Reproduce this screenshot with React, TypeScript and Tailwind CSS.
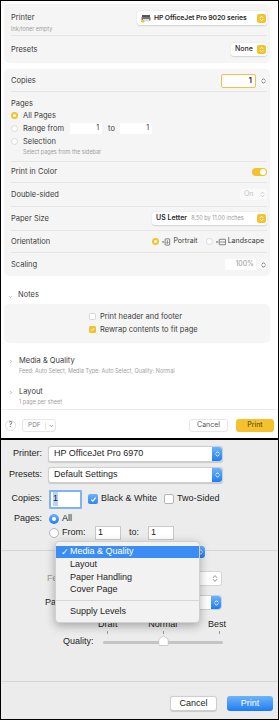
import React from "react"

// tiny up/down chevrons used in steppers
function Chevs({ color = "white", w = 5, h = 7 }: { color?: string; w?: number; h?: number }) {
  return (
    <svg width={w} height={h} viewBox="0 0 5 7">
      <path d="M1 2.7L2.5 1.2L4 2.7M1 4.3L2.5 5.8L4 4.3" stroke={color} strokeWidth="0.9" fill="none" strokeLinecap="round" strokeLinejoin="round" />
    </svg>
  )
}

function YStep() {
  return (
    <span className="flex h-[9px] w-[9px] shrink-0 items-center justify-center rounded-[2px] bg-[#f4c22c]">
      <Chevs />
    </span>
  )
}

function GrayStep() {
  return (
    <span className="flex h-[11px] w-[8px] shrink-0 items-center justify-center rounded-full bg-[#fafafa]">
      <Chevs color="#666" w={5} h={8} />
    </span>
  )
}

function YRadio() {
  return (
    <span className="flex h-[7px] w-[7px] shrink-0 items-center justify-center rounded-full bg-[#f4c22c]">
      <span className="h-[3px] w-[3px] rounded-full bg-white" />
    </span>
  )
}

function ERadio({ className = "" }: { className?: string }) {
  return <span className={`block h-[7px] w-[7px] shrink-0 rounded-full border border-[#d9d9d9] bg-white ${className}`} />
}

function Row({ h, label, children, last }: { h: string; label: string; children?: React.ReactNode; last?: boolean }) {
  return (
    <div className={`flex ${h} items-center justify-between ${last ? "" : "border-b border-[#e6e6e6]"}`}>
      <span className="whitespace-nowrap text-[7.5px] text-[#3c3c3c]">{label}</span>
      {children}
    </div>
  )
}

function TopDialog() {
  return (
    <div className="flex h-[437px] flex-col bg-white font-['Inter',sans-serif] whitespace-nowrap">
      <div className="pl-[3px] pt-[3px]">
        {/* printer / presets card */}
        <div className="w-[266px] rounded-[5px] bg-[#f5f5f5] pl-[7px] pr-[3px]">
          <div className="h-[32px] border-b border-[#e6e6e6] pt-[7px]">
            <div className="flex h-[14px] items-center justify-between">
              <span className="text-[7.5px] text-[#3c3c3c]">Printer</span>
              <div className="flex h-[14px] w-[130px] items-center rounded-[3px] bg-white pl-[4px] pr-[1px] shadow-[0_0.5px_1.5px_rgba(0,0,0,0.15)]">
                <svg width="10" height="9" viewBox="0 0 10 9" className="shrink-0">
                  <rect x="1" y="1" width="8" height="2" fill="#555" />
                  <rect x="0.5" y="3" width="9" height="3.5" rx="0.5" fill="#777" />
                  <rect x="2" y="5" width="6" height="2.5" fill="#ddd" />
                  <circle cx="1.8" cy="7.3" r="1.5" fill="#f4c22c" />
                </svg>
                <span className="ml-[3px] flex-1 text-[6.8px] font-semibold tracking-[-0.1px] text-[#2a2a2a]">HP OfficeJet Pro 9020 series</span>
                <YStep />
              </div>
            </div>
            <div className="text-[5.5px] leading-[8px] text-[#a0a0a0]">Ink/toner empty</div>
          </div>
          <Row h="h-[27px]" label="Presets" last>
            <div className="flex h-[13px] w-[36px] items-center justify-between rounded-[3px] bg-white pl-[4px] pr-[1px] shadow-[0_0.5px_1.5px_rgba(0,0,0,0.15)]">
              <span className="text-[7px] font-medium text-[#2a2a2a]">None</span>
              <YStep />
            </div>
          </Row>
        </div>

        {/* main options card */}
        <div className="mt-[6px] w-[266px] rounded-[5px] bg-[#f5f5f5] pl-[7px] pr-[3px]">
          <div className="flex h-[23px] items-center justify-between border-b border-[#e6e6e6] pt-[2px]">
            <span className="text-[7.5px] text-[#3c3c3c]">Copies</span>
            <div className="flex items-center gap-[3px]">
              <div className="flex h-[14px] w-[35px] items-center justify-end rounded-[2px] border-[1.5px] border-[#f1c24a] bg-white pr-[3px] text-[7.5px] font-semibold text-[#222]">
                1
              </div>
              <GrayStep />
            </div>
          </div>

          <div className="h-[70px] border-b border-[#e6e6e6] pt-[7px]">
            <div className="flex h-[10px] items-center text-[7.5px] text-[#3c3c3c]">Pages</div>
            <div className="flex h-[13px] items-center gap-[5px]">
              <YRadio />
              <span className="text-[7.5px] text-[#3c3c3c]">All Pages</span>
            </div>
            <div className="flex h-[13px] items-center">
              <ERadio />
              <span className="ml-[5px] w-[47px] text-[7.5px] text-[#3c3c3c]">Range from</span>
              <span className="flex h-[11px] w-[32px] items-center justify-end bg-white pr-[3px] text-[7px] text-[#333]">1</span>
              <span className="ml-[6px] w-[12px] text-[7.5px] text-[#3c3c3c]">to</span>
              <span className="flex h-[11px] w-[32px] items-center justify-end bg-white pr-[3px] text-[7px] text-[#333]">1</span>
            </div>
            <div className="flex h-[13px] items-center gap-[5px]">
              <ERadio />
              <span className="text-[7.5px] text-[#3c3c3c]">Selection</span>
            </div>
            <div className="flex h-[8px] items-center pl-[12px] text-[5.5px] text-[#a0a0a0]">Select pages from the sidebar</div>
          </div>

          <Row h="h-[21px]" label="Print in Color">
            <span className="flex h-[8px] w-[15px] items-center justify-end rounded-full bg-[#f4c22c] pr-[1px]">
              <span className="h-[6px] w-[6px] rounded-full bg-white" />
            </span>
          </Row>

          <Row h="h-[24px]" label="Double-sided">
            <span className="flex h-[11px] w-[27px] items-center justify-between rounded-[3px] bg-[#fafafa] pl-[4px] pr-[2px] text-[7px] text-[#c4c4c4]">
              On
              <Chevs color="#c4c4c4" w={5} h={7} />
            </span>
          </Row>

          <Row h="h-[24px]" label="Paper Size">
            <div className="flex h-[13px] w-[115px] items-center rounded-[3px] bg-white pl-[4px] pr-[1px] shadow-[0_0.5px_1.5px_rgba(0,0,0,0.15)]">
              <span className="text-[7px] font-semibold text-[#2a2a2a]">US Letter</span>
              <span className="ml-[4px] flex-1 text-[5.5px] text-[#9a9a9a]">8.50 by 11.00 inches</span>
              <YStep />
            </div>
          </Row>

          <Row h="h-[22px]" label="Orientation">
            <div className="flex items-center pr-[3px]">
              <YRadio />
              <svg width="9" height="8" viewBox="0 0 10 8" className="ml-[3px]">
                <path d="M0.5 4H2.5M1.5 3L0.5 4L1.5 5" stroke="#555" strokeWidth="0.7" fill="none" />
                <rect x="3.5" y="0.5" width="5" height="7" rx="0.6" stroke="#555" strokeWidth="0.8" fill="none" />
                <path d="M6 2V5.5M4.8 4.4L6 5.6L7.2 4.4" stroke="#555" strokeWidth="0.7" fill="none" />
              </svg>
              <span className="ml-[2px] text-[7px] text-[#3c3c3c]">Portrait</span>
              <ERadio className="ml-[8px]" />
              <svg width="10" height="8" viewBox="0 0 11 8" className="ml-[3px]">
                <path d="M0.5 4H2.5M1.5 3L0.5 4L1.5 5" stroke="#555" strokeWidth="0.7" fill="none" />
                <rect x="3.5" y="1" width="7" height="6" rx="0.6" stroke="#555" strokeWidth="0.8" fill="none" />
                <path d="M4 4H10" stroke="#555" strokeWidth="0.7" />
              </svg>
              <span className="ml-[2px] text-[7px] text-[#3c3c3c]">Landscape</span>
            </div>
          </Row>

          <Row h="h-[23px]" label="Scaling" last>
            <div className="flex items-center gap-[3px]">
              <span className="flex h-[11px] w-[31px] items-center justify-end bg-white pr-[2px] text-[7px] text-[#9a9a9a]">100%</span>
              <GrayStep />
            </div>
          </Row>
        </div>

        {/* notes */}
        <div className="flex h-[28px] items-end pb-[5px] pl-[4px]">
          <svg width="5" height="4" viewBox="0 0 5 4">
            <path d="M1 1.2L2.5 2.7L4 1.2" stroke="#999" strokeWidth="0.7" fill="none" />
          </svg>
          <span className="ml-[5px] text-[7.5px] leading-[8px] text-[#3c3c3c]">Notes</span>
        </div>
        <div className="h-[39px] w-[266px] rounded-[5px] bg-[#f5f5f5] pl-[85px] pt-[6px]">
          <div className="flex h-[13px] items-center gap-[4px]">
            <span className="h-[7px] w-[7px] rounded-[1.5px] border border-[#d5d5d5] bg-white" />
            <span className="text-[7.5px] text-[#3c3c3c]">Print header and footer</span>
          </div>
          <div className="flex h-[13px] items-center gap-[4px]">
            <span className="flex h-[7px] w-[7px] items-center justify-center rounded-[1.5px] bg-[#f4c22c]">
              <svg width="5" height="5" viewBox="0 0 5 5">
                <path d="M1 2.6L2 3.6L4 1.2" stroke="white" strokeWidth="0.9" fill="none" />
              </svg>
            </span>
            <span className="text-[7.5px] text-[#3c3c3c]">Rewrap contents to fit page</span>
          </div>
        </div>

        {/* collapsed sections */}
        <div className="h-[33px] pl-[5px] pt-[13px]">
          <div className="flex h-[10px] items-center">
            <svg width="4" height="5" viewBox="0 0 4 5">
              <path d="M1.2 1L2.7 2.5L1.2 4" stroke="#999" strokeWidth="0.7" fill="none" />
            </svg>
            <span className="ml-[6px] text-[7.5px] text-[#3c3c3c]">Media &amp; Quality</span>
          </div>
          <div className="flex h-[10px] items-center pl-[10px] text-[5.5px] text-[#a0a0a0]">
            Feed: Auto Select, Media Type: Auto Select, Quality: Normal
          </div>
        </div>
        <div className="h-[33px] pl-[5px] pt-[11px]">
          <div className="flex h-[10px] items-center">
            <svg width="4" height="5" viewBox="0 0 4 5">
              <path d="M1.2 1L2.7 2.5L1.2 4" stroke="#999" strokeWidth="0.7" fill="none" />
            </svg>
            <span className="ml-[6px] text-[7.5px] text-[#3c3c3c]">Layout</span>
          </div>
          <div className="flex h-[10px] items-center pl-[10px] text-[5.5px] text-[#a0a0a0]">1 page per sheet</div>
        </div>
      </div>

      {/* footer */}
      <div className="flex h-[28px] items-center justify-between border-t border-[#ececec] pl-[4px] pr-[4px] pt-[4px]">
        <div className="flex items-center">
          <span className="flex h-[11px] w-[11px] items-center justify-center rounded-full border border-[#e0e0e0] bg-white text-[7px] text-[#555]">?</span>
          <span className="ml-[6px] flex h-[13px] w-[34px] items-center rounded-[3px] border border-[#e6e6e6] bg-white pl-[5px] text-[6.5px] text-[#8a8a8a]">
            PDF
            <span className="ml-[4px] h-[8px] w-px bg-[#e6e6e6]" />
            <svg width="5" height="4" viewBox="0 0 5 4" className="ml-[3px]">
              <path d="M1 1.2L2.5 2.7L4 1.2" stroke="#777" strokeWidth="0.8" fill="none" />
            </svg>
          </span>
        </div>
        <div className="flex items-center gap-[8px]">
          <span className="flex h-[13px] w-[39px] items-center justify-center rounded-[3px] border border-[#e6e6e6] bg-white text-[7px] text-[#555]">Cancel</span>
          <span className="flex h-[13px] w-[38px] items-center justify-center rounded-[3px] bg-[#f4c22c] text-[7px] text-[#4a3a00]">Print</span>
        </div>
      </div>
    </div>
  )
}

function BlueStep({ h = "h-[16px]" }: { h?: string }) {
  return (
    <span className={`flex ${h} w-[10px] shrink-0 items-center justify-center rounded-r-[3px] bg-gradient-to-b from-[#6cb3fa] to-[#1a7cf4]`}>
      <Chevs w={5} h={8} />
    </span>
  )
}

function Popup({ text, w }: { text: string; w: string }) {
  return (
    <div className={`flex h-[16px] ${w} items-center justify-between rounded-[3px] border border-[#cfcfcf] bg-white shadow-[0_0.5px_1px_rgba(0,0,0,0.15)]`}>
      <span className="pl-[5px] text-[9px] text-[#1d1d1d]">{text}</span>
      <BlueStep h="h-[14px]" />
    </div>
  )
}

function BlueCheck() {
  return (
    <span className="flex h-[10px] w-[10px] shrink-0 items-center justify-center rounded-[2px] bg-gradient-to-b from-[#6cb3fa] to-[#2a86f5]">
      <svg width="7" height="7" viewBox="0 0 7 7">
        <path d="M1.3 3.7L2.8 5.2L5.7 1.6" stroke="white" strokeWidth="1.2" fill="none" />
      </svg>
    </span>
  )
}

function BottomDialog() {
  return (
    <div className="relative h-[279px] whitespace-nowrap bg-[#ececec] font-['Liberation_Sans',Arial,sans-serif] text-[9px] text-[#1d1d1d]">
      <div className="pt-[6px]">
        <div className="flex items-center">
          <span className="w-[41px] text-right">Printer:</span>
          <div className="ml-[6px]">
            <Popup text="HP OfficeJet Pro 6970" w="w-[175px]" />
          </div>
        </div>
        <div className="mt-[5px] flex items-center">
          <span className="w-[41px] text-right">Presets:</span>
          <div className="ml-[6px]">
            <Popup text="Default Settings" w="w-[175px]" />
          </div>
        </div>
        <div className="mt-[6px] flex h-[20px] items-center">
          <span className="w-[41px] text-right">Copies:</span>
          <span className="ml-[7px] flex h-[19px] w-[33px] items-center rounded-[1px] border-[2px] border-[#7eb4f3] bg-white pl-[2px]">
            <span className="bg-[#b6d5fb]">1</span>
          </span>
          <span className="ml-[6px]">
            <BlueCheck />
          </span>
          <span className="ml-[3px]">Black &amp; White</span>
          <span className="ml-[7px] h-[10px] w-[10px] rounded-[2px] border border-[#b5b5b5] bg-white" />
          <span className="ml-[3px]">Two-Sided</span>
        </div>
        <div className="mt-[3px] flex h-[13px] items-center">
          <span className="w-[41px] text-right">Pages:</span>
          <span className="ml-[7px] flex h-[10px] w-[10px] items-center justify-center rounded-full bg-gradient-to-b from-[#6cb3fa] to-[#1a7cf4]">
            <span className="h-[4px] w-[4px] rounded-full bg-white" />
          </span>
          <span className="ml-[3px]">All</span>
        </div>
        <div className="flex h-[15px] items-center">
          <span className="ml-[48px] h-[10px] w-[10px] rounded-full border border-[#b5b5b5] bg-white" />
          <span className="ml-[3px] w-[33px]">From:</span>
          <span className="flex h-[14px] w-[26px] items-center border border-[#c8c8c8] bg-white pl-[2px]">1</span>
          <span className="ml-[8px] w-[19px]">to:</span>
          <span className="flex h-[14px] w-[26px] items-center border border-[#c8c8c8] bg-white pl-[2px]">1</span>
        </div>

        <div className="h-[11px] border-b border-[#d6d6d6]" />
        <div className="-mt-[5px] ml-[59px] flex h-[12px] w-[145px] items-center justify-end rounded-[3px] bg-white">
          <BlueStep h="h-[12px]" />
        </div>

        <div className="mt-[13px] flex h-[15px] items-center">
          <span className="ml-[46px] text-[#9a9a9a]">Feed:</span>
          <div className="ml-auto mr-[56px] flex h-[15px] w-[110px] items-center justify-end rounded-[3px] border border-[#d6d6d6] bg-white pr-[3px]">
            <Chevs color="#b0b0b0" w={6} h={9} />
          </div>
        </div>
        <div className="mt-[9px] flex h-[15px] items-center">
          <span className="ml-[44px]">Paper Type:</span>
          <div className="ml-auto mr-[56px] flex h-[15px] w-[110px] items-center justify-end rounded-[3px] border border-[#cfcfcf] bg-white">
            <BlueStep h="h-[13px]" />
          </div>
        </div>

        <div className="ml-[97px] mt-[10px] flex h-[10px] w-[128px] items-center justify-between">
          <span>Draft</span>
          <span>Normal</span>
          <span>Best</span>
        </div>
        <div className="ml-[106px] mt-[1px] flex h-[4px] w-[113px] justify-between">
          <span className="h-[3px] w-px bg-[#9a9a9a]" />
          <span className="h-[3px] w-px bg-[#9a9a9a]" />
          <span className="h-[3px] w-px bg-[#9a9a9a]" />
        </div>
        <div className="mt-[2px] flex h-[10px] items-center">
          <span className="ml-[62px] w-[33px]">Quality:</span>
          <div className="relative ml-[7px] h-[3px] w-[120px] rounded-full bg-[#c4c4c4]">
            <svg width="11" height="11" viewBox="0 0 11 11" className="absolute left-[55px] top-[-6px]">
              <path d="M5.5 0.7L10.2 4.5V9.5a1 1 0 0 1-1 1H1.8a1 1 0 0 1-1-1V4.5Z" fill="white" stroke="#bdbdbd" strokeWidth="0.7" />
            </svg>
          </div>
        </div>

        <div className="mt-[34px] border-t border-[#d6d6d6]" />
        <div className="mt-[14px] flex items-center justify-end gap-[10px] pr-[5px]">
          <span className="flex h-[15px] w-[47px] items-center justify-center rounded-[3px] border border-[#cfcfcf] bg-white shadow-[0_0.5px_1px_rgba(0,0,0,0.15)]">
            Cancel
          </span>
          <span className="flex h-[15px] w-[46px] items-center justify-center rounded-[3px] bg-gradient-to-b from-[#6cb3fa] to-[#1a7cf4] text-white">
            Print
          </span>
        </div>
      </div>

      {/* open panel menu */}
      <div className="absolute left-[54px] top-[101px] w-[145px] rounded-[4px] border border-[#d0d0d0] bg-[#f2f2f2] py-[4px] shadow-[0_3px_10px_rgba(0,0,0,0.3)]">
        <div className="flex h-[12px] items-center bg-[#3b8df5] text-white">
          <span className="w-[14px] pl-[5px] text-[8.5px]">✓</span>
          <span>Media &amp; Quality</span>
        </div>
        <div className="flex h-[13px] items-center pl-[14px]">Layout</div>
        <div className="flex h-[13px] items-center pl-[14px]">Paper Handling</div>
        <div className="flex h-[12px] items-center pl-[14px]">Cover Page</div>
        <div className="my-[4px] border-t border-[#d6d6d6]" />
        <div className="flex h-[13px] items-center pl-[14px]">Supply Levels</div>
      </div>
    </div>
  )
}

export default function App() {
  return (
    <div className="h-[720px] w-[279px] overflow-hidden border border-black bg-white">
      <TopDialog />
      <div className="h-[2px] bg-black" />
      <BottomDialog />
    </div>
  )
}
